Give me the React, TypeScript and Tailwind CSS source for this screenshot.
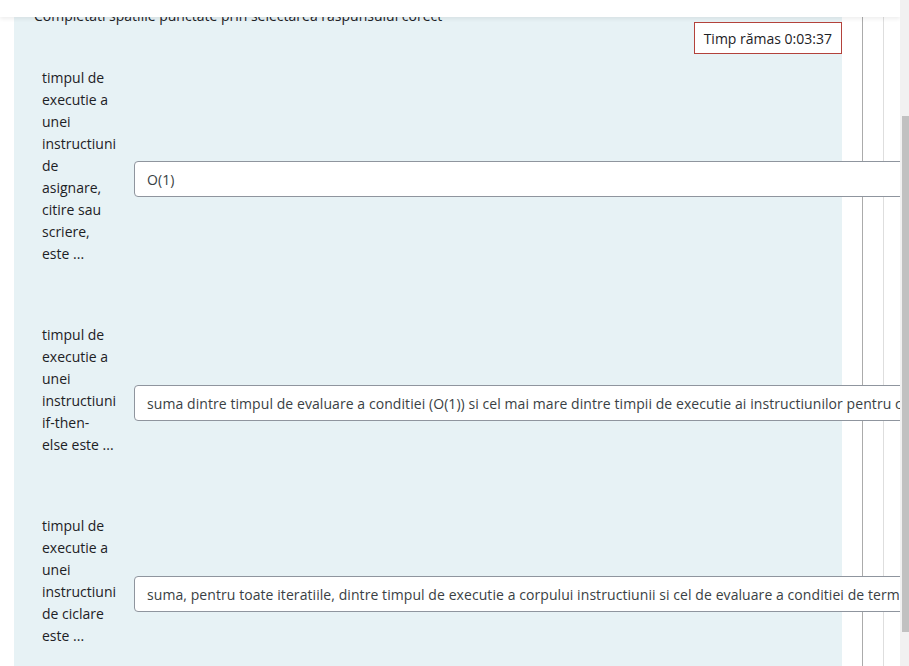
import React from "react";

const rows = [
  {
    label: "timpul de executie a unei instructiuni de asignare, citire sau scriere, este ...",
    answer: "O(1)",
  },
  {
    label: "timpul de executie a unei instructiuni if-then-\nelse este ...",
    answer:
      "suma dintre timpul de evaluare a conditiei (O(1)) si cel mai mare dintre timpii de executie ai instructiunilor pentru cazul adevarat sau fals",
  },
  {
    label: "timpul de executie a unei instructiuni de ciclare este ...",
    answer:
      "suma, pentru toate iteratiile, dintre timpul de executie a corpului instructiunii si cel de evaluare a conditiei de terminare",
  },
];

const MatchRow = ({ label, answer }: { label: string; answer: string }) => (
  <div className="flex items-center">
    <div className="w-[76px] whitespace-pre-line pb-[26px] text-[14px] leading-[22px] text-[#1d2125]">
      {label}
    </div>
    <div className="relative z-10 ml-[18px] flex h-[36px] w-[820px] shrink-0 items-center overflow-hidden whitespace-nowrap rounded-[4px] border border-[#8f959e] bg-white pl-[12px] text-[14px] tracking-[0.07px] text-[#3a3f44]">
      {answer}
    </div>
  </div>
);

export default function App() {
  return (
    <div
      className="relative flex h-[666px] w-[909px] overflow-hidden bg-white"
      style={{ fontFamily: '"Open Sans", "Noto Sans", sans-serif' }}
    >
      <div className="relative flex h-full w-[900px] shrink-0 overflow-hidden bg-white">
        <div className="absolute left-0 top-0 z-20 h-[17px] w-full bg-white shadow-[0_2px_4px_rgba(0,0,0,0.07)]" />

        <div className="ml-[14px] flex h-full w-[828px] shrink-0 flex-col bg-[#e7f2f5]">
          <div className="pl-[20px] pt-[5px] text-[14px] leading-[21px] text-[#1d2125]">
            Completati spatiile punctate prin selectarea raspunsului corect
          </div>
          <div className="flex justify-end">
            <div className="mt-[-4px] flex h-[32px] items-center border border-[#b3423b] bg-white px-[9px] text-[14px] text-[#1d2125]">
              Timp rămas 0:03:37
            </div>
          </div>
          <div className="mt-[13px] flex flex-col gap-[33px] pl-[28px]">
            {rows.map((r) => (
              <MatchRow key={r.label} label={r.label} answer={r.answer} />
            ))}
          </div>
        </div>

        <div className="flex h-full flex-1 pt-[17px]">
          <div className="w-[20px]" />
          <div className="w-[21px] border-l border-[#ababab]" />
          <div className="flex-1 border-l border-[#dedede]" />
        </div>
      </div>

      <div className="flex h-full flex-1 flex-col bg-[#f1f1f1] pl-[2px]">
        <div className="h-[116px]" />
        <div className="h-[516px] bg-[#c1c1c1]" />
      </div>
    </div>
  );
}
